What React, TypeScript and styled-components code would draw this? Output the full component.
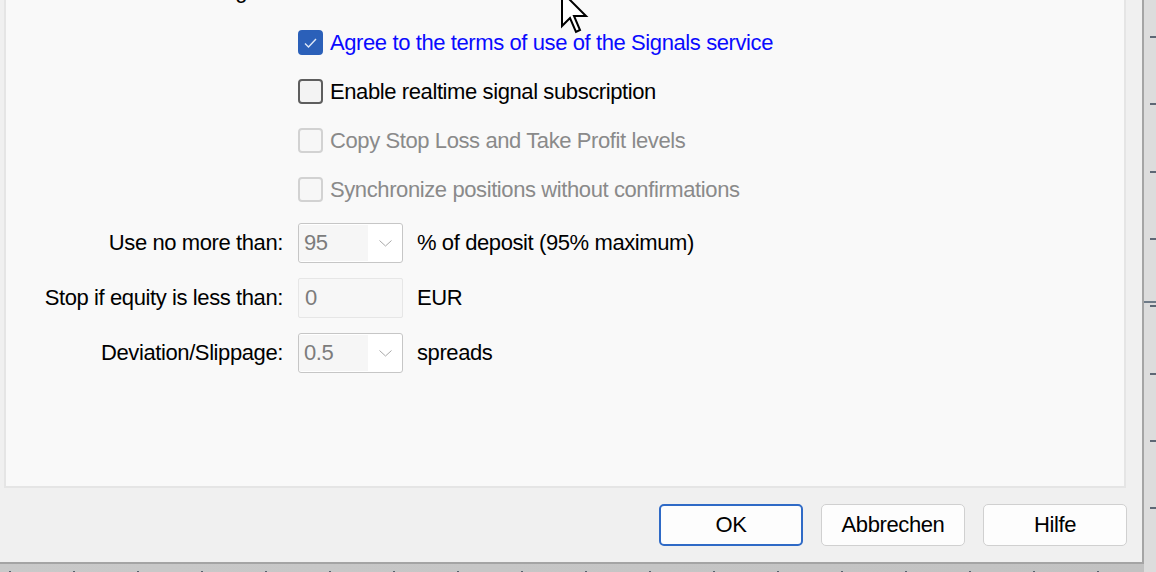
import styled, { createGlobalStyle } from 'styled-components';

const GlobalStyle = createGlobalStyle`
  html, body {
    margin: 0;
    padding: 0;
  }
  body {
    width: 1156px;
    height: 572px;
    overflow: hidden;
    background: #dcdcdc;
    font-family: "Liberation Sans", Arial, sans-serif;
  }
`;

type Tone = 'link' | 'normal' | 'disabled';

const toneColor: Record<Tone, string> = {
  link: '#0a0aff',
  normal: '#000000',
  disabled: '#8a8a8a',
};

const Screen = styled.div`
  position: relative;
  width: 1156px;
  height: 572px;
  display: grid;
  grid-template-columns: 1144px 12px;
  grid-template-rows: 564px 8px;
  overflow: hidden;
  background: #dcdcdc;
`;

const Dialog = styled.div`
  grid-column: 1;
  grid-row: 1;
  box-sizing: border-box;
  background: #f0f0f0;
  border-right: 2px solid #a4a4a4;
  border-bottom: 2px solid #a4a4a4;
  padding: 0 16px 0 4px;
  display: flex;
  flex-direction: column;
`;

const Panel = styled.div`
  box-sizing: border-box;
  height: 488px;
  background: #f9f9f9;
  border: 2px solid #e5e5e5;
  border-top: none;
  font-size: 22px;
  letter-spacing: -0.4px;
`;

const CutLabel = styled.div`
  width: 241px;
  margin-top: -21px;
  line-height: 24px;
  text-align: right;
  color: #000;
`;

const CheckList = styled.div`
  display: flex;
  flex-direction: column;
  padding: 15px 0 0 292px;
`;

const CheckRow = styled.label`
  height: 49px;
  display: flex;
  align-items: center;
  gap: 7px;
`;

const Box = styled.span<{ $checked?: boolean; $disabled?: boolean }>`
  box-sizing: border-box;
  width: 25px;
  height: 25px;
  border-radius: 4px;
  display: flex;
  align-items: center;
  justify-content: center;
  background: ${p => (p.$checked ? '#2b60b9' : p.$disabled ? '#f7f7f7' : '#f3f3f3')};
  border: 2px solid ${p => (p.$checked ? '#2b60b9' : p.$disabled ? '#d2d2d2' : '#5e5e5e')};
`;

const Text = styled.span<{ $tone: Tone }>`
  color: ${p => toneColor[p.$tone]};
  white-space: nowrap;
`;

const FormGrid = styled.div`
  display: grid;
  grid-template-columns: 292px 105px auto;
  grid-auto-rows: 40px;
  row-gap: 15px;
  margin-top: 9px;
  align-items: center;
`;

const FieldLabel = styled.span`
  padding-right: 15px;
  text-align: right;
  white-space: nowrap;
  color: #000;
`;

const Unit = styled.span`
  padding-left: 14px;
  white-space: nowrap;
  color: #000;
`;

const Combo = styled.div`
  box-sizing: border-box;
  height: 40px;
  display: flex;
  border: 1px solid #c6c6c6;
  border-radius: 3px;
  background: #ffffff;
  overflow: hidden;
`;

const ComboValue = styled.span`
  width: 64px;
  padding-left: 5px;
  display: flex;
  align-items: center;
  background: #f6f6f6;
  color: #7c7c7c;
  margin: 1px 0;
`;

const ComboArrow = styled.span`
  flex: 1;
  display: flex;
  align-items: center;
  justify-content: center;
`;

const Edit = styled.div`
  box-sizing: border-box;
  height: 40px;
  padding-left: 6px;
  display: flex;
  align-items: center;
  border: 1px solid #e6e6e6;
  border-radius: 2px;
  background: #f7f7f7;
  color: #7c7c7c;
`;

const ButtonRow = styled.div`
  display: flex;
  justify-content: flex-end;
  gap: 18px;
  padding-top: 16px;
  margin-right: -1px;
`;

const Button = styled.button<{ $primary?: boolean }>`
  box-sizing: border-box;
  width: 144px;
  height: 42px;
  border-radius: 5px;
  background: #fdfdfd;
  border: ${p => (p.$primary ? '2px solid #2f6ac6' : '1px solid #d0d0d0')};
  font-family: "Liberation Sans", Arial, sans-serif;
  font-size: 22px;
  letter-spacing: -0.4px;
  color: #000;
  padding: 0;
`;

const RightAxis = styled.div`
  grid-column: 2;
  grid-row: 1 / span 2;
  background: #dcdcdc;
`;

const BottomAxis = styled.div`
  grid-column: 1;
  grid-row: 2;
  background: linear-gradient(90deg, #c9c9c9, #c2c2c2);
`;

const Pointer = styled.svg`
  position: absolute;
  left: 561px;
  top: -9px;
`;

const Check = ({ checked, disabled, tone, children }: { checked?: boolean; disabled?: boolean; tone: Tone; children: string }) => (
  <CheckRow>
    <Box $checked={checked} $disabled={disabled}>
      {checked && (
        <svg width="15" height="12" viewBox="0 0 15 12">
          <polyline points="2,6.5 5.5,10 13,2" fill="none" stroke="#dfe8f7" strokeWidth="1.4" />
        </svg>
      )}
    </Box>
    <Text $tone={tone}>{children}</Text>
  </CheckRow>
);

const Chevron = () => (
  <svg width="13" height="7" viewBox="0 0 13 7">
    <polyline points="0.5,0.5 6.5,6 12.5,0.5" fill="none" stroke="#a8a8a8" strokeWidth="1" />
  </svg>
);

const rightTicks = [36, 103, 171, 238, 305, 373, 440, 507];
const bottomTicks = Array.from({ length: 18 }, (_, i) => 9 + i * 64);

const App = () => (
  <>
    <GlobalStyle />
    <Screen>
      <Dialog>
        <Panel>
          <CutLabel>Trading</CutLabel>
          <CheckList>
            <Check checked tone="link">Agree to the terms of use of the Signals service</Check>
            <Check tone="normal">Enable realtime signal subscription</Check>
            <Check disabled tone="disabled">Copy Stop Loss and Take Profit levels</Check>
            <Check disabled tone="disabled">Synchronize positions without confirmations</Check>
          </CheckList>
          <FormGrid>
            <FieldLabel>Use no more than:</FieldLabel>
            <Combo>
              <ComboValue>95</ComboValue>
              <ComboArrow><Chevron /></ComboArrow>
            </Combo>
            <Unit>% of deposit (95% maximum)</Unit>

            <FieldLabel>Stop if equity is less than:</FieldLabel>
            <Edit>0</Edit>
            <Unit>EUR</Unit>

            <FieldLabel>Deviation/Slippage:</FieldLabel>
            <Combo>
              <ComboValue>0.5</ComboValue>
              <ComboArrow><Chevron /></ComboArrow>
            </Combo>
            <Unit>spreads</Unit>
          </FormGrid>
        </Panel>
        <ButtonRow>
          <Button $primary>OK</Button>
          <Button>Abbrechen</Button>
          <Button>Hilfe</Button>
        </ButtonRow>
      </Dialog>

      <RightAxis>
        <svg width="12" height="572" viewBox="0 0 12 572">
          <rect x="0" y="301" width="12" height="2" fill="#6e7a87" />
          {rightTicks.map(y => (
            <rect key={y} x="6" y={y} width="6" height="2" fill="#5d6875" />
          ))}
        </svg>
      </RightAxis>
      <BottomAxis>
        <svg width="1144" height="8" viewBox="0 0 1144 8">
          {bottomTicks.map(x => (
            <rect key={x} x={x} y="1" width="2" height="6" fill="#56616d" />
          ))}
        </svg>
      </BottomAxis>

      <Pointer width="28" height="44" viewBox="0 0 14 22">
        <polygon
          points="0.5,0.5 0.5,17.5 4.5,13.5 7.5,20.5 9.5,19.5 6.5,12.5 12.5,12.5"
          fill="#ffffff"
          stroke="#000000"
          strokeWidth="1"
          strokeLinejoin="miter"
        />
      </Pointer>
    </Screen>
  </>
);

export default App;
